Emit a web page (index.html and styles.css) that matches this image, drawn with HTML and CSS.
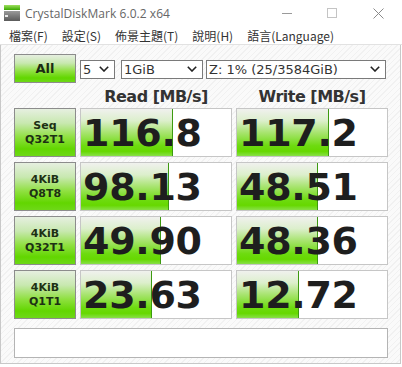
FILE: index.html
```html
<!DOCTYPE html>
<html>
<head>
<meta charset="utf-8">
<link rel="stylesheet" href="styles.css">
</head>
<body>
<div class="window">
  <div class="titlebar">
    <svg class="appicon" width="16" height="16" viewBox="0 0 16 16">
      <defs>
        <linearGradient id="gb" x1="0" y1="0" x2="0" y2="1">
          <stop offset="0" stop-color="#9fe060"/>
          <stop offset="1" stop-color="#3aa800"/>
        </linearGradient>
        <linearGradient id="db" x1="0" y1="0" x2="0" y2="1">
          <stop offset="0" stop-color="#9a9a9a"/>
          <stop offset="1" stop-color="#5a5a5a"/>
        </linearGradient>
      </defs>
      <rect x="0" y="0" width="16" height="5" fill="url(#gb)"/>
      <rect x="0" y="6" width="16" height="10" fill="url(#db)"/>
      <rect x="1" y="10" width="3" height="2" fill="#e8e8e8"/>
    </svg>
    <span class="title">CrystalDiskMark 6.0.2 x64</span>
    <div class="controls">
      <span class="ctl min"></span>
      <span class="ctl max"></span>
      <svg class="ctl close" width="11" height="11" viewBox="0 0 11 11"><path d="M0.5 0.5 L10.5 10.5 M10.5 0.5 L0.5 10.5" stroke="#8a8a8a" stroke-width="1" fill="none"/></svg>
    </div>
  </div>
  <div class="menubar">
    <span class="menu">檔案(F)</span>
    <span class="menu">設定(S)</span>
    <span class="menu">佈景主題(T)</span>
    <span class="menu">說明(H)</span>
    <span class="menu">語言(Language)</span>
  </div>
  <div class="client">
    <div class="grid">
      <div class="label all">All</div>
      <div class="selects">
        <div class="sel s-count"><span>5</span><svg class="chev" width="10" height="6" viewBox="0 0 10 6"><path d="M0.8 0.8 L5 5 L9.2 0.8" stroke="#222" stroke-width="1.6" fill="none"/></svg></div>
        <div class="sel s-size"><span>1GiB</span><svg class="chev" width="10" height="6" viewBox="0 0 10 6"><path d="M0.8 0.8 L5 5 L9.2 0.8" stroke="#222" stroke-width="1.6" fill="none"/></svg></div>
        <div class="sel s-drive"><span>Z: 1% (25/3584GiB)</span><svg class="chev" width="10" height="6" viewBox="0 0 10 6"><path d="M0.8 0.8 L5 5 L9.2 0.8" stroke="#222" stroke-width="1.6" fill="none"/></svg></div>
      </div>
      <div></div>
      <div class="head">Read [MB/s]</div>
      <div class="head">Write [MB/s]</div>

      <div class="label"><span>Seq</span><span>Q32T1</span></div>
      <div class="cell"><div class="bar" style="width:92px"></div><span class="val">116.8</span></div>
      <div class="cell"><div class="bar" style="width:92px"></div><span class="val">117.2</span></div>

      <div class="label"><span>4KiB</span><span>Q8T8</span></div>
      <div class="cell"><div class="bar" style="width:88px"></div><span class="val">98.13</span></div>
      <div class="cell"><div class="bar" style="width:81px"></div><span class="val">48.51</span></div>

      <div class="label"><span>4KiB</span><span>Q32T1</span></div>
      <div class="cell"><div class="bar" style="width:80px"></div><span class="val">49.90</span></div>
      <div class="cell"><div class="bar" style="width:81px"></div><span class="val">48.36</span></div>

      <div class="label"><span>4KiB</span><span>Q1T1</span></div>
      <div class="cell"><div class="bar" style="width:71px"></div><span class="val">23.63</span></div>
      <div class="cell"><div class="bar" style="width:62px"></div><span class="val">12.72</span></div>
    </div>
    <div class="comment"></div>
  </div>
</div>
</body>
</html>
```

FILE: styles.css
```css
* { box-sizing: border-box; }
body {
  margin: 0;
  background: #fff;
  font-family: "DejaVu Sans", sans-serif;
}
.window {
  width: 402px;
  height: 367px;
  display: flex;
  flex-direction: column;
  background: #fff;
}
.titlebar {
  height: 26px;
  display: flex;
  align-items: center;
  padding-left: 4px;
}
.appicon { margin-top: -1px; }
.title {
  margin-left: 5px;
  font-family: "Open Sans", "Noto Sans", sans-serif;
  font-size: 12px;
  color: #666;
  letter-spacing: 0.05px;
}
.controls {
  margin-left: auto;
  display: flex;
  align-items: center;
  height: 26px;
}
.ctl { display: block; }
.min {
  width: 10px;
  height: 1px;
  background: #9a9a9a;
  margin-right: 35px;
  margin-top: 1px;
}
.max {
  width: 10px;
  height: 10px;
  border: 1px solid #c4c4c4;
  margin-right: 36px;
}
.close { margin-right: 18px; }
.menubar {
  height: 19px;
  display: flex;
  align-items: center;
  gap: 14px;
  padding-left: 9px;
  border-bottom: 1px solid #e2e2e2;
  font-family: "Noto Sans CJK TC", sans-serif;
  font-size: 12px;
  color: #333;
}
.client {
  flex: 1;
  margin: 0 1px 3px 0;
  border-left: 1px solid #c8c8c8;
  border-right: 1px solid #c8c8c8;
  border-bottom: 1px solid #c8c8c8;
  background: repeating-linear-gradient(135deg, #f1f1f1 0 1px, #fafafa 1px 4px);
  padding: 9px 0 0 13px;
}
.grid {
  display: grid;
  grid-template-columns: 62px 152px 152px;
  grid-template-rows: 29px 15px 49px 49px 49px 49px;
  column-gap: 4px;
  row-gap: 5px;
}
.label {
  border: 1px solid #8c8c8c;
  background: linear-gradient(#e6efe0 0%, #c8e8b0 30%, #8fe040 60%, #62d600 85%, #6ed818 100%);
  display: flex;
  flex-direction: column;
  align-items: center;
  justify-content: center;
  font-weight: bold;
  font-size: 11px;
  line-height: 14px;
  color: #1d3014;
}
.label.all {
  font-size: 13px;
  color: #1c2a14;
}
.selects {
  grid-column: 2 / 4;
  display: flex;
  align-items: center;
  padding-top: 1px;
}
.sel {
  height: 19px;
  background: #fff;
  border: 1px solid #7a7a7a;
  display: flex;
  align-items: center;
  justify-content: space-between;
  padding: 0 5px 0 2px;
  font-size: 13px;
  color: #333;
}
.s-count { width: 35px; margin-right: 6px; }
.s-size { width: 82px; margin-right: 3px; }
.s-drive { width: 180px; }
.chev { display: block; }
.head {
  display: flex;
  align-items: center;
  justify-content: center;
  font-weight: bold;
  font-size: 16px;
  letter-spacing: -0.5px;
  color: #333;
  padding-top: 1px;
}
.cell {
  position: relative;
  background: #fff;
  border: 1px solid #c6c6c6;
  display: flex;
  align-items: center;
  overflow: hidden;
}
.bar {
  position: absolute;
  left: 0;
  top: 0;
  bottom: 0;
  background: linear-gradient(#f0f1ee 0%, #dcefcc 25%, #a8e470 50%, #6edb10 78%, #66d800 90%, #88e048 100%);
  border-right: 1px solid #3d9a10;
}
.val {
  position: relative;
  padding-left: 2px;
  font-weight: bold;
  font-size: 38px;
  color: #1e1e1e;
  letter-spacing: -0.3px;
  margin-top: 1px;
}
.comment {
  margin-top: 9px;
  width: 374px;
  height: 30px;
  background: #fff;
  border: 1px solid #b4b4b4;
}
```
